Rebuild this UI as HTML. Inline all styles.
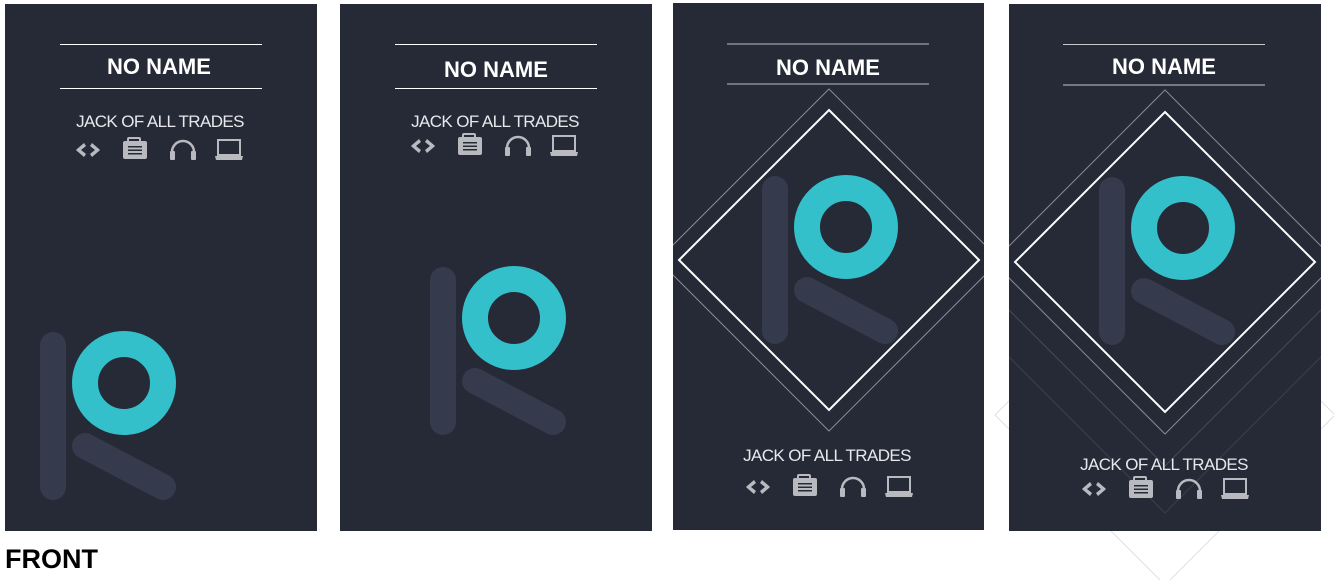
<!DOCTYPE html>
<html><head><meta charset="utf-8"><style>
html,body{margin:0;padding:0;background:#fff;width:1334px;height:580px;overflow:hidden}
svg{display:block}
.t{font-family:"Liberation Sans",sans-serif;font-weight:bold;fill:#fff}
.s{font-family:"Liberation Sans",sans-serif;fill:#e8e8ec;font-size:17px;letter-spacing:-0.6px}
</style></head><body>
<svg width="1334" height="580" viewBox="0 0 1334 580" xmlns="http://www.w3.org/2000/svg">
<defs>
<g id="logo">
<rect x="-84" y="-51" width="26" height="168" rx="13" fill="#353a4d"/>
<line x1="-39" y1="63" x2="39" y2="104" stroke="#353a4d" stroke-width="26" stroke-linecap="round"/>
<circle cx="0" cy="0" r="39" fill="none" stroke="#33c0cb" stroke-width="26"/>
</g>
<g id="icons" fill="#b9b9c0">
<path d="M2 -1 L1 0 L2 1 L9 7 L11 4 L6 0 L11 -4 L9 -7Z M24 -1 L25 0 L24 1 L17 7 L15 4 L20 0 L15 -4 L17 -7Z"/>
<path d="M54 -9 L54 -11 L64 -11 L64 -9 L66 -9 L66 -11 A2 2 0 0 0 64 -13 L54 -13 A2 2 0 0 0 52 -11 L52 -9Z"/>
<rect x="48" y="-9" width="24" height="18" rx="2"/>
<rect x="53" y="-4" width="14" height="1.5" fill="#252a36"/>
<rect x="53" y="-0.5" width="14" height="1.5" fill="#252a36"/>
<rect x="53" y="3" width="14" height="1.5" fill="#252a36"/>
<path d="M97 8 L97 2 A11 11 0 0 1 119 2 L119 8" fill="none" stroke="#b9b9c0" stroke-width="2.5"/>
<rect x="95" y="1" width="5" height="9" rx="1"/>
<rect x="116" y="1" width="5" height="9" rx="1"/>
<rect x="143" y="-10" width="22" height="15" fill="none" stroke="#b9b9c0" stroke-width="2"/>
<path d="M140 6 L168 6 L167 10 L141 10Z"/>
</g>
<clipPath id="c3"><rect x="673" y="3" width="311" height="527"/></clipPath>
<clipPath id="c4"><rect x="1009" y="4" width="312" height="527"/></clipPath>
</defs>

<polygon points="1165,245 1335,415 1165,585 995,415" fill="none" stroke="#e0e0e0" stroke-width="1"/>

<!-- card 1 -->
<rect x="5" y="4" width="312" height="527" fill="#252a36"/>
<line x1="60" y1="44.5" x2="262" y2="44.5" stroke="#fff" stroke-width="1"/>
<line x1="60" y1="88.5" x2="262" y2="88.5" stroke="#fff" stroke-width="1"/>
<text class="t" x="159" y="74" font-size="22" text-anchor="middle">NO NAME</text>
<text class="s" x="160" y="127" text-anchor="middle">JACK OF ALL TRADES</text>
<use href="#icons" x="75" y="150"/>
<use href="#logo" x="124" y="383"/>

<!-- card 2 -->
<rect x="340" y="4" width="312" height="527" fill="#252a36"/>
<line x1="395" y1="44.5" x2="597" y2="44.5" stroke="#fff" stroke-width="1"/>
<line x1="395" y1="88.5" x2="597" y2="88.5" stroke="#fff" stroke-width="1"/>
<text class="t" x="496" y="77" font-size="22" text-anchor="middle">NO NAME</text>
<text class="s" x="495" y="127" text-anchor="middle">JACK OF ALL TRADES</text>
<use href="#icons" x="410" y="146"/>
<use href="#logo" x="514" y="318"/>

<!-- card 3 -->
<rect x="673" y="3" width="311" height="527" fill="#252a36"/>
<g clip-path="url(#c3)">
<polygon points="829,89 1000,260 829,431 658,260" fill="none" stroke="#8a8a94" stroke-width="1"/>
<polygon points="829,110 979,260 829,410 679,260" fill="none" stroke="#fff" stroke-width="2"/>
</g>
<line x1="727" y1="44" x2="929" y2="44" stroke="#8a8a94" stroke-width="1.5"/>
<line x1="727" y1="84" x2="929" y2="84" stroke="#8a8a94" stroke-width="1.5"/>
<text class="t" x="828" y="75" font-size="22" text-anchor="middle">NO NAME</text>
<use href="#logo" x="846" y="227"/>
<text class="s" x="827" y="461" text-anchor="middle">JACK OF ALL TRADES</text>
<use href="#icons" x="745" y="487"/>

<!-- card 4 -->
<rect x="1009" y="4" width="312" height="527" fill="#252a36"/>
<g clip-path="url(#c4)">
<polyline points="914,262 1165,513 1416,262" fill="none" stroke="#3a3f4e" stroke-width="1"/>
<polyline points="961,262 1165,466 1369,262" fill="none" stroke="#464a58" stroke-width="1"/>
<polygon points="1165,90 1337,262 1165,434 993,262" fill="none" stroke="#8a8a94" stroke-width="1"/>
<polygon points="1165,112 1315,262 1165,412 1015,262" fill="none" stroke="#fff" stroke-width="2"/>
</g>
<line x1="1063" y1="44.5" x2="1265" y2="44.5" stroke="#c8c8cc" stroke-width="1"/>
<line x1="1063" y1="85" x2="1265" y2="85" stroke="#c8c8cc" stroke-width="1"/>
<text class="t" x="1164" y="74" font-size="22" text-anchor="middle">NO NAME</text>
<use href="#logo" x="1183" y="228"/>
<text class="s" x="1164" y="470" text-anchor="middle">JACK OF ALL TRADES</text>
<use href="#icons" x="1081" y="489"/>

<text x="5" y="568" font-family="Liberation Sans, sans-serif" font-weight="bold" font-size="27" fill="#000">FRONT</text>
</svg>
</body></html>
